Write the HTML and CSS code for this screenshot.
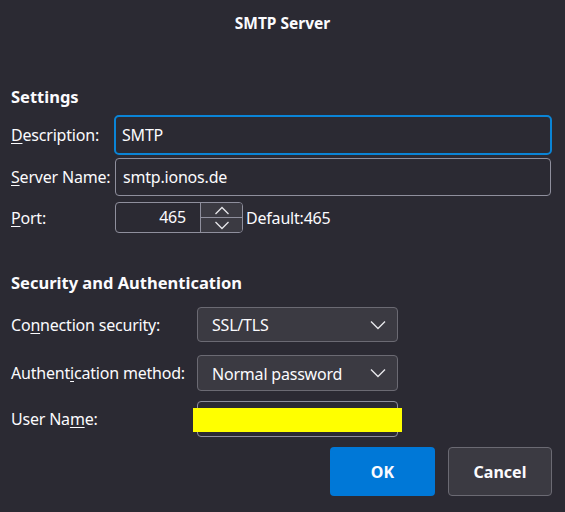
FILE: index.html
```html
<!DOCTYPE html>
<html lang="en">
<head>
<meta charset="utf-8">
<title>SMTP Server</title>
<link rel="stylesheet" href="styles.css">
</head>
<body>
<div class="dialog">
  <div class="titlebar">SMTP Server</div>

  <section class="settings">
    <h2 class="heading">Settings</h2>
    <div class="row row-desc">
      <label class="label label-s"><u>D</u>escription:</label>
      <div class="field field-focus">SMTP</div>
    </div>
    <div class="row row-server">
      <label class="label label-s"><u>S</u>erver Name:</label>
      <div class="field field-server">smtp.ionos.de</div>
    </div>
    <div class="row row-port">
      <label class="label label-s"><u>P</u>ort:</label>
      <div class="port-box">
        <span class="port-value">465</span>
        <div class="spinner">
          <div class="spin-btn spin-up">
            <svg width="16" height="9" viewBox="0 0 16 9"><path d="M1.5 8 L8 1.5 L14.5 8" fill="none" stroke="#e6e6ea" stroke-width="1.3"/></svg>
          </div>
          <div class="spin-btn spin-down">
            <svg width="16" height="9" viewBox="0 0 16 9"><path d="M1.5 1 L8 7.5 L14.5 1" fill="none" stroke="#e6e6ea" stroke-width="1.3"/></svg>
          </div>
        </div>
      </div>
      <span class="default-text">Default:465</span>
    </div>
  </section>

  <section class="security">
    <h2 class="heading heading-security">Security and Authentication</h2>
    <div class="row row-conn">
      <label class="label label-l">Co<u>n</u>nection security:</label>
      <div class="select">
        <span>SSL/TLS</span>
        <svg class="chev" width="16" height="10" viewBox="0 0 16 10"><path d="M1 1.5 L8 8.5 L15 1.5" fill="none" stroke="#e6e6ea" stroke-width="1.4"/></svg>
      </div>
    </div>
    <div class="row row-auth">
      <label class="label label-l">Authent<u>i</u>cation method:</label>
      <div class="select select-auth">
        <span>Normal password</span>
        <svg class="chev" width="16" height="10" viewBox="0 0 16 10"><path d="M1 1.5 L8 8.5 L15 1.5" fill="none" stroke="#e6e6ea" stroke-width="1.4"/></svg>
      </div>
    </div>
    <div class="row row-user">
      <label class="label label-l">User Na<u>m</u>e:</label>
      <div class="user-wrap">
        <div class="field field-user"></div>
        <div class="redact"></div>
      </div>
    </div>
  </section>

  <div class="buttons">
    <button class="btn btn-ok">OK</button>
    <button class="btn btn-cancel">Cancel</button>
  </div>
</div>
</body>
</html>
```

FILE: styles.css
```css
html, body {
  margin: 0;
  padding: 0;
  background: #2b2a33;
}

body {
  font-family: "Noto Sans", "Open Sans", sans-serif;
  color: #fbfbfe;
  font-size: 16px;
  letter-spacing: -0.2px;
  width: 565px;
  height: 512px;
  overflow: hidden;
}

.dialog {
  padding: 0 13px 0 11px;
}

.titlebar {
  height: 46px;
  line-height: 46px;
  text-align: center;
  font-weight: bold;
  font-size: 15.5px;
  letter-spacing: 0;
  margin-left: -11px;
  margin-right: -13px;
}

.heading {
  margin: 41px 0 8px 0;
  font-size: 16.5px;
  line-height: 20px;
  font-weight: bold;
  letter-spacing: 0;
}

.heading-security {
  margin: 40px 0 14px 0;
}

.row {
  display: flex;
  align-items: center;
}

.label {
  line-height: 20px;
  white-space: nowrap;
  flex: none;
}

.label u {
  text-underline-offset: 2px;
}

.label-s {
  width: 103px;
}

.label-l {
  width: 186px;
}

.row-desc {
  height: 40px;
  margin-bottom: 3px;
}

.row-server {
  height: 38px;
  margin-bottom: 6px;
}

.row-port {
  height: 31px;
}

.field {
  box-sizing: border-box;
  background: #2b2a33;
  border: 1px solid #8f8f9d;
  border-radius: 4px;
  color: #fbfbfe;
  display: flex;
  align-items: center;
  padding-left: 7px;
  height: 100%;
}

.field-focus {
  flex: 1;
  border: 2px solid #0a84d6;
  border-radius: 5px;
  padding-left: 6px;
}

.field-server {
  flex: 1;
  margin-left: 1px;
  margin-right: 1px;
}

.port-box {
  box-sizing: border-box;
  width: 128px;
  height: 31px;
  margin-left: 1px;
  border: 1px solid #8f8f9d;
  border-radius: 4px;
  display: flex;
  overflow: hidden;
}

.port-value {
  flex: 1;
  text-align: right;
  line-height: 29px;
  padding-right: 14px;
}

.spinner {
  width: 41px;
  display: flex;
  flex-direction: column;
  background: #3b3a42;
  border-left: 1px solid #8f8f9d;
}

.spin-btn {
  flex: 1;
  display: flex;
  align-items: center;
  justify-content: center;
}

.spin-up {
  border-bottom: 1px solid #8f8f9d;
}

.default-text {
  margin-left: 3px;
}

.row-conn {
  height: 35px;
  margin-bottom: 13px;
}

.row-auth {
  height: 36px;
  margin-bottom: 10px;
}

.row-user {
  height: 36px;
}

.select {
  box-sizing: border-box;
  width: 201px;
  height: 100%;
  background: #3b3a42;
  border: 1px solid #6b6a73;
  border-radius: 4px;
  display: flex;
  align-items: center;
  justify-content: space-between;
  padding: 0 11px 0 14px;
}

.select-auth span {
  padding-top: 2px;
}

.user-wrap {
  position: relative;
  width: 201px;
  height: 100%;
}

.field-user {
  width: 100%;
}

.redact {
  position: absolute;
  left: -4px;
  right: -4px;
  top: 7px;
  height: 24px;
  background: #ffff00;
}

.buttons {
  display: flex;
  justify-content: flex-end;
  gap: 13px;
  margin-top: 10px;
}

.btn {
  box-sizing: border-box;
  height: 49px;
  width: 105px;
  border-radius: 4px;
  font-family: inherit;
  font-size: 16px;
  font-weight: bold;
  letter-spacing: 0;
  color: #fbfbfe;
  cursor: default;
}

.btn-ok {
  background: #0078d7;
  border: none;
}

.btn-cancel {
  width: 104px;
  background: #3b3a42;
  border: 1px solid #6b6a73;
}
```
